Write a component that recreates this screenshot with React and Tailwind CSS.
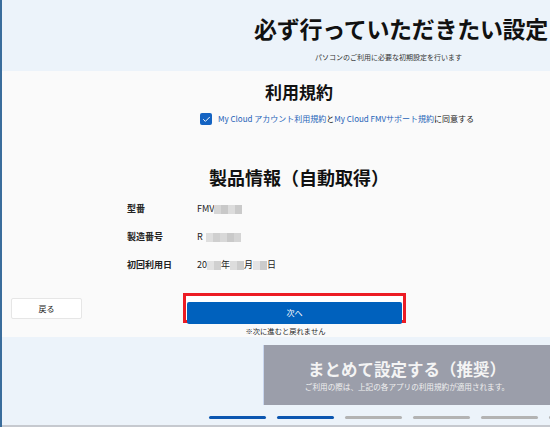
import { Check } from 'lucide-react'

const jp = { fontFamily: '"Noto Sans CJK JP", "Noto Sans", sans-serif' }

function Blur({ cells }) {
  return (
    <span className="inline-flex items-center align-middle h-[9px]">
      {cells.map((c, i) => (
        <span key={i} className="inline-block h-[9px] w-[7px]" style={{ backgroundColor: c }} />
      ))}
    </span>
  )
}

function InfoRow({ label, children }) {
  return (
    <div className="flex items-center h-[28px]">
      <div className="w-[70px] text-[9px] font-bold text-[#222]">{label}</div>
      <div className="flex items-center text-[9px] text-[#222]">{children}</div>
    </div>
  )
}

export default function App() {
  const steps = ['done', 'done', 'todo', 'todo', 'todo', 'todo']

  return (
    <div style={jp} className="w-[550px] h-[427px] overflow-hidden flex flex-col border-l-2 border-[#3a6d9c] bg-[#ecf3fa]">
      {/* header */}
      <div className="h-[71px] shrink-0 bg-[#ecf3fa] flex flex-col items-end pr-[2px]">
        <h1 className="mt-[12px] text-[23px] leading-[32px] font-bold text-[#111] tracking-[-0.3px]">
          必ず行っていただきたい設定
        </h1>
        <p className="mt-[8px] mr-[86px] text-[7px] leading-[10px] text-[#333]">
          パソコンのご利用に必要な初期設定を行います
        </p>
      </div>

      {/* main */}
      <div className="h-[266px] shrink-0 bg-[#fafafa] flex flex-col">
        <div className="flex flex-col items-center pl-[46px]">
          <h2 className="mt-[9px] text-[17px] leading-[24px] font-bold text-[#111]">利用規約</h2>
          <label className="self-start ml-[152px] mt-[9px] flex items-center gap-[6px]">
            <span className="w-[12px] h-[12px] rounded-[2px] bg-[#1463c2] flex items-center justify-center">
              <Check size={9} strokeWidth={2.5} color="#fff" />
            </span>
            <span className="text-[8px] leading-[12px] text-[#222] whitespace-nowrap">
              <span className="text-[#1f63b8]">My Cloud アカウント利用規約</span>と<span className="text-[#1f63b8]">My Cloud FMVサポート規約</span>に同意する
            </span>
          </label>
          <h2 className="mt-[39px] text-[18px] leading-[26px] font-bold text-[#111]">製品情報（自動取得）</h2>
        </div>

        <div className="ml-[125px] mt-[5px] flex flex-col">
          <InfoRow label="型番">
            FMV<Blur cells={['#d6d6d6', '#c8c8c8', '#dcdcdc', '#cacaca']} />
          </InfoRow>
          <InfoRow label="製造番号">
            R<span className="w-[3px]" /><Blur cells={['#dedede', '#cfcfcf', '#d8d8d8', '#c9c9c9', '#d4d4d4']} />
          </InfoRow>
          <InfoRow label="初回利用日">
            20<Blur cells={['#e2e2e2', '#d0d0d0']} />年<Blur cells={['#dddddd', '#cdcdcd']} />月<Blur cells={['#e4e4e4', '#cbcbcb']} />日
          </InfoRow>
        </div>

        <div className="mt-[14px] flex items-start pl-[9px]">
          <button className="mt-[5px] w-[71px] h-[21px] bg-white border border-[#e6e6e6] rounded-[2px] text-[8px] text-[#222]">
            戻る
          </button>
          <div className="ml-[101px] flex flex-col items-center">
            <div className="w-[223px] h-[30px] border-[3px] border-[#ec1c24] p-[1px] bg-white">
              <button className="w-full h-full bg-[#0061bd] rounded-[2px] text-[8px] text-white">次へ</button>
            </div>
            <p className="mt-[3px] pr-[18px] text-[7.3px] leading-[11px] text-[#222]">※次に進むと戻れません</p>
          </div>
        </div>
      </div>

      {/* footer */}
      <div className="flex-1 flex flex-col border-b-2 border-[#c6c9cf]">
        <div className="mt-[8px] ml-auto w-[287px] h-[60px] bg-[#9b9eaa] border-l border-[#c9d6ee] flex flex-col items-center justify-center">
          <div className="text-[16.5px] leading-[22px] font-bold text-[#f4f4f4]">まとめて設定する（推奨）</div>
          <div className="mt-[1px] text-[7.6px] leading-[11px] text-[#f0f0f0]">ご利用の際は、上記の各アプリの利用規約が適用されます。</div>
        </div>
        <div className="mt-[11px] flex gap-[11px] pl-[207px]">
          {steps.map((s, i) => (
            <div
              key={i}
              className={s === 'done' ? 'shrink-0 w-[57px] h-[2.5px] rounded-full bg-[#0b56b0]' : 'shrink-0 w-[57px] h-[2.5px] rounded-full bg-[#b3b3b3]'}
            />
          ))}
        </div>
      </div>
    </div>
  )
}
